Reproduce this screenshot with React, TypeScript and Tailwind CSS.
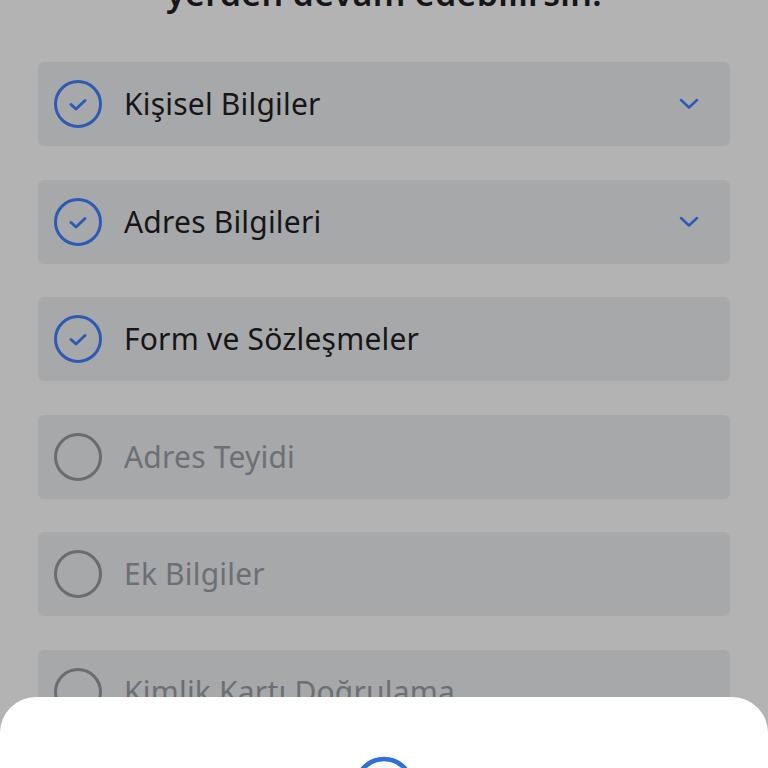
import React from "react";

const items = [
  { label: "Kişisel Bilgiler", done: true, chevron: true },
  { label: "Adres Bilgileri", done: true, chevron: true },
  { label: "Form ve Sözleşmeler", done: true, chevron: false },
  { label: "Adres Teyidi", done: false, chevron: false },
  { label: "Ek Bilgiler", done: false, chevron: false },
  { label: "Kimlik Kartı Doğrulama", done: false, chevron: false },
];

function DoneIcon() {
  return (
    <svg width="50" height="50" viewBox="0 0 50 50" className="shrink-0">
      <circle cx="25" cy="25" r="22.5" fill="none" stroke="#2b5bb5" strokeWidth="3" />
      <path d="M18 25.5 L23 30 L32 21.5" fill="none" stroke="#2b5bb5" strokeWidth="3" strokeLinecap="round" strokeLinejoin="round" />
    </svg>
  );
}

function EmptyIcon() {
  return (
    <svg width="50" height="50" viewBox="0 0 50 50" className="shrink-0">
      <circle cx="25" cy="25" r="22.5" fill="none" stroke="#696c70" strokeWidth="3" />
    </svg>
  );
}

function Chevron() {
  return (
    <svg width="22" height="14" viewBox="0 0 22 14">
      <path d="M3 3 L11 10.5 L19 3" fill="none" stroke="#2b5bb5" strokeWidth="2.5" strokeLinecap="round" strokeLinejoin="round" />
    </svg>
  );
}

export default function App() {
  return (
    <div
      className="relative h-[768px] w-[768px] overflow-hidden bg-[#b3b3b3]"
      style={{ fontFamily: '"Noto Sans", "Open Sans", sans-serif' }}
    >
      <div className="mt-[-27px] h-[40px] text-center text-[34px] font-semibold leading-[40px] tracking-[0.3px] text-[#161616]">
        yerden devam edebilirsin.
      </div>
      <div className="mt-[49px] flex flex-col gap-[33.6px] px-[38px]">
        {items.map((it) => (
          <div
            key={it.label}
            className="flex h-[84px] items-center rounded-[6px] bg-[#a7a8aa] pl-[15px] pr-[30px]"
          >
            {it.done ? <DoneIcon /> : <EmptyIcon />}
            <span
              className={
                "ml-[21px] flex-1 text-[30px] leading-none tracking-[0.2px] " +
                (it.done ? "text-[#161616]" : "text-[#6c6f73]")
              }
            >
              {it.label}
            </span>
            {it.chevron && <Chevron />}
          </div>
        ))}
      </div>
      <div className="absolute left-0 right-0 top-[697px] h-[200px] rounded-t-[36px] bg-white">
        <svg
          width="64"
          height="64"
          viewBox="0 0 64 64"
          className="absolute left-[352px] top-[58px]"
        >
          <circle cx="32" cy="32" r="28" fill="none" stroke="#2f6ee0" strokeWidth="4.5" />
        </svg>
      </div>
    </div>
  );
}
